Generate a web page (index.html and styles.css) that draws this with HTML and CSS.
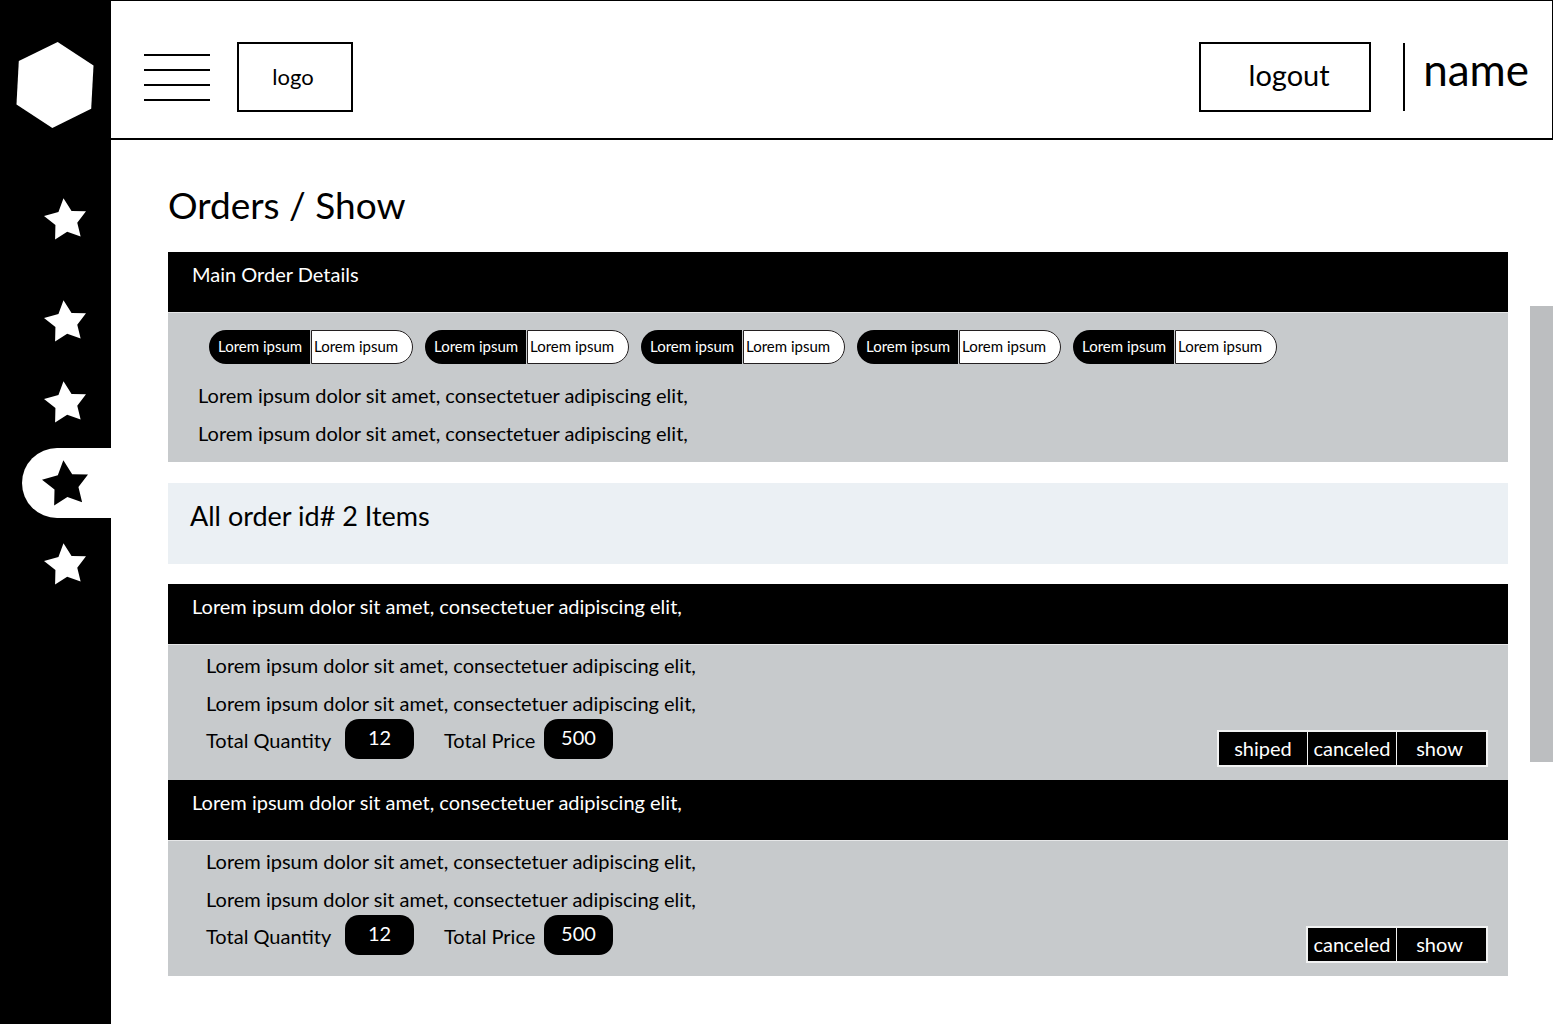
FILE: index.html
```html
<!DOCTYPE html>
<html lang="en">
<head>
  <meta charset="utf-8">
  <meta name="viewport" content="width=device-width, initial-scale=1">
  <title>Orders / Show</title>
  <link rel="stylesheet" href="styles.css">
</head>
<body>
  <svg class="sprite" aria-hidden="true">
    <symbol id="star" viewBox="0 0 125 124">
      <path d="M58 0 82 38 125 39 99 73 109 114 69 100 33 123 34 80 0 53 43 41Z"/>
    </symbol>
  </svg>

  <div class="app">
    <aside class="sidebar">
      <a class="brand" href="#" aria-label="Home">
        <svg class="brand-mark" viewBox="0 0 234 259" aria-hidden="true">
          <path d="M125 0 233 71 226 201 109 259 1 188 8 57Z"/>
        </svg>
      </a>
      <nav class="nav" aria-label="Main">
        <a class="nav-item nav-item-first" href="#" aria-label="Dashboard"><svg class="star" aria-hidden="true"><use href="#star"/></svg></a>
        <a class="nav-item" href="#" aria-label="Products"><svg class="star" aria-hidden="true"><use href="#star"/></svg></a>
        <a class="nav-item" href="#" aria-label="Customers"><svg class="star" aria-hidden="true"><use href="#star"/></svg></a>
        <a class="nav-item nav-item-active" href="#" aria-label="Orders" aria-current="page"><svg class="star" aria-hidden="true"><use href="#star"/></svg></a>
        <a class="nav-item" href="#" aria-label="Settings"><svg class="star" aria-hidden="true"><use href="#star"/></svg></a>
      </nav>
    </aside>

    <div class="main">
      <header class="topbar">
        <button class="menu" type="button" aria-label="Menu">
          <span class="menu-line"></span>
          <span class="menu-line"></span>
          <span class="menu-line"></span>
          <span class="menu-line"></span>
        </button>
        <a class="logo" href="#">logo</a>
        <button class="logout" type="button">logout</button>
        <div class="user">name</div>
      </header>

      <div class="page">
        <main class="content">
          <h1 class="title">Orders / Show</h1>

          <section class="panel">
            <h2 class="panel-head">Main Order Details</h2>
            <div class="panel-body summary">
              <dl class="pills">
                <div class="pill"><dt class="pill-key">Lorem ipsum</dt><dd class="pill-value">Lorem ipsum</dd></div>
                <div class="pill"><dt class="pill-key">Lorem ipsum</dt><dd class="pill-value">Lorem ipsum</dd></div>
                <div class="pill"><dt class="pill-key">Lorem ipsum</dt><dd class="pill-value">Lorem ipsum</dd></div>
                <div class="pill"><dt class="pill-key">Lorem ipsum</dt><dd class="pill-value">Lorem ipsum</dd></div>
                <div class="pill"><dt class="pill-key">Lorem ipsum</dt><dd class="pill-value">Lorem ipsum</dd></div>
              </dl>
              <div class="lines">
                <p class="line">Lorem ipsum dolor sit amet, consectetuer adipiscing elit,</p>
                <p class="line">Lorem ipsum dolor sit amet, consectetuer adipiscing elit,</p>
              </div>
            </div>
          </section>

          <h2 class="band">All order id# 2 Items</h2>

          <section class="panel">
            <h3 class="panel-head">Lorem ipsum dolor sit amet, consectetuer adipiscing elit,</h3>
            <div class="panel-body item">
              <div class="lines">
                <p class="line">Lorem ipsum dolor sit amet, consectetuer adipiscing elit,</p>
                <p class="line">Lorem ipsum dolor sit amet, consectetuer adipiscing elit,</p>
              </div>
              <div class="item-foot">
                <dl class="totals">
                  <dt class="total-label">Total Quantity</dt>
                  <dd class="badge">12</dd>
                  <dt class="total-label">Total Price</dt>
                  <dd class="badge">500</dd>
                </dl>
                <div class="actions">
                  <button class="action" type="button">shiped</button>
                  <button class="action" type="button">canceled</button>
                  <button class="action" type="button">show</button>
                </div>
              </div>
            </div>
          </section>

          <section class="panel">
            <h3 class="panel-head">Lorem ipsum dolor sit amet, consectetuer adipiscing elit,</h3>
            <div class="panel-body item">
              <div class="lines">
                <p class="line">Lorem ipsum dolor sit amet, consectetuer adipiscing elit,</p>
                <p class="line">Lorem ipsum dolor sit amet, consectetuer adipiscing elit,</p>
              </div>
              <div class="item-foot">
                <dl class="totals">
                  <dt class="total-label">Total Quantity</dt>
                  <dd class="badge">12</dd>
                  <dt class="total-label">Total Price</dt>
                  <dd class="badge">500</dd>
                </dl>
                <div class="actions">
                  <button class="action" type="button">canceled</button>
                  <button class="action" type="button">show</button>
                </div>
              </div>
            </div>
          </section>
        </main>
        <div class="scroll-thumb"></div>
      </div>
    </div>
  </div>
</body>
</html>
```
FILE: styles.css
```css
*,
*::before,
*::after {
  box-sizing: border-box;
}

body,
h1,
h2,
h3,
p,
dl,
dd {
  margin: 0;
}

body {
  background: #fff;
  color: #000;
  font-family: Lato, "Open Sans", sans-serif;
  font-size: 20px;
  line-height: 26px;
}

h1,
h2,
h3 {
  font-weight: 400;
}

a {
  color: inherit;
  text-decoration: none;
}

button {
  margin: 0;
  padding: 0;
  border: 0;
  background: none;
  color: inherit;
  font: inherit;
  cursor: pointer;
}

.sprite {
  display: none;
}

.app {
  display: flex;
  min-height: 100vh;
}

/* Sidebar */

.sidebar {
  flex: 0 0 111px;
  background: #000;
  color: #fff;
}

.brand {
  display: block;
  padding: 42px 16px 0;
}

.brand-mark {
  display: block;
  width: 78px;
  height: 86px;
  fill: currentColor;
}

.nav {
  display: flex;
  flex-direction: column;
  gap: 11px;
  margin-top: 56px;
  padding-left: 22px;
}

.nav-item {
  display: flex;
  align-items: center;
  height: 70px;
  padding-left: 22px;
}

.nav-item-first {
  margin-bottom: 21px;
}

.nav-item-active {
  padding-left: 20px;
  border-radius: 35px 0 0 35px;
  background: #fff;
  color: #000;
}

.star {
  width: 42px;
  height: 42px;
  fill: currentColor;
}

.nav-item-active .star {
  width: 46px;
  height: 46px;
}

/* Top bar */

.main {
  flex: 1;
  min-width: 0;
}

.topbar {
  display: flex;
  align-items: center;
  padding: 41px 23px 26px 33px;
  border: solid #000;
  border-width: 1px 1px 2px 0;
}

.menu {
  display: flex;
  flex-direction: column;
  gap: 13px;
  width: 66px;
}

.menu-line {
  height: 2px;
  background: #000;
}

.logo {
  display: flex;
  align-items: center;
  justify-content: center;
  width: 116px;
  height: 70px;
  margin-left: 27px;
  padding-right: 4px;
  border: 2px solid #000;
  font-size: 22px;
}

.logout {
  width: 172px;
  height: 70px;
  margin-left: auto;
  padding: 0 0 4px 8px;
  border: 2px solid #000;
  font-size: 29px;
}

.user {
  height: 68px;
  margin-left: 32px;
  padding-left: 18px;
  border-left: 2px solid #000;
  font-size: 44px;
  line-height: 52px;
}

/* Page */

.page {
  display: flex;
  align-items: flex-start;
  gap: 22px;
  padding: 40px 0 48px 57px;
}

.content {
  flex: 1;
  min-width: 0;
}

.scroll-thumb {
  flex: 0 0 23px;
  height: 456px;
  margin-top: 126px;
  background: #bcbec0;
}

.title {
  margin-bottom: 22px;
  font-size: 37px;
  line-height: 50px;
}

.panel-head {
  min-height: 60px;
  padding: 9px 24px 25px;
  background: #000;
  color: #fff;
  font-size: 20px;
}

.panel-body {
  border-top: 1px solid #e6e7e8;
  background: #c7cacc;
}

.lines {
  display: flex;
  flex-direction: column;
  gap: 12px;
}

.summary {
  padding: 17px 30px 16px;
}

.summary .lines {
  margin-top: 18px;
}

.pills {
  display: flex;
  flex-wrap: wrap;
  gap: 12px;
  padding-left: 11px;
}

.pill {
  display: grid;
  grid-template-columns: 101px 102px;
  gap: 1px;
  font-size: 15px;
  line-height: 32px;
}

.pill-key,
.pill-value {
  height: 34px;
  white-space: nowrap;
}

.pill-key {
  padding-left: 9px;
  border-radius: 17px 0 0 17px;
  background: #000;
  color: #fff;
}

.pill-value {
  padding-left: 2px;
  border: 1px solid #231f20;
  border-radius: 0 17px 17px 0;
  background: #fff;
  line-height: 30px;
}

.band {
  min-height: 81px;
  margin: 21px 0 20px;
  padding: 16px 22px 30px;
  background: #ebf0f4;
  font-size: 27px;
  line-height: 34px;
}

.item {
  padding: 7px 20px 13px 38px;
}

.item-foot {
  display: flex;
  align-items: flex-end;
  justify-content: space-between;
  margin-top: 3px;
}

.totals {
  display: grid;
  grid-template-columns: 139px 99px 100px 69px;
  padding-bottom: 8px;
}

.total-label {
  padding-top: 8px;
}

.badge {
  width: 69px;
  height: 40px;
  border-radius: 14px;
  background: #000;
  color: #fff;
  line-height: 36px;
  text-align: center;
}

.actions {
  display: flex;
  gap: 1px;
  padding: 2px;
  background: #f1f2f2;
}

.action {
  width: 88px;
  height: 33px;
  padding-bottom: 1px;
  background: #000;
  color: #fff;
}

.action:last-child {
  width: 89px;
  padding-right: 4px;
}
```
